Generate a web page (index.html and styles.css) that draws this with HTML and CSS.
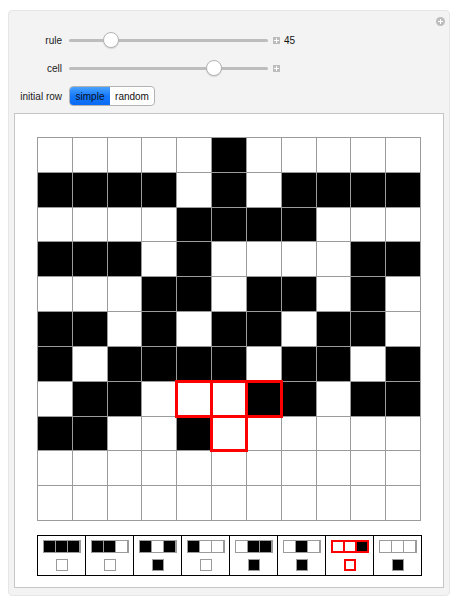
FILE: index.html
```html
<!DOCTYPE html>
<html>
<head>
<meta charset="utf-8">
<link rel="stylesheet" href="styles.css">
</head>
<body>
<div class="panel">
  <span class="corner-plus"></span>
  <div class="controls">
    <div class="row">
      <span class="label">rule</span>
      <div class="slider"><div class="track"></div><span class="thumb" style="left:34px"></span></div>
      <span class="plus"></span>
      <span class="value">45</span>
    </div>
    <div class="row">
      <span class="label">cell</span>
      <div class="slider"><div class="track"></div><span class="thumb" style="left:137px"></span></div>
      <span class="plus"></span>
    </div>
    <div class="row">
      <span class="label">initial row</span>
      <div class="seg">
        <span class="btn on">simple</span>
        <span class="btn">random</span>
      </div>
    </div>
  </div>
  <div class="output">
    <div class="grid">
      <i></i><i></i><i></i><i></i><i></i><i class="k"></i><i></i><i></i><i></i><i></i><i></i>
      <i class="k"></i><i class="k"></i><i class="k"></i><i class="k"></i><i></i><i class="k"></i><i></i><i class="k"></i><i class="k"></i><i class="k"></i><i class="k"></i>
      <i></i><i></i><i></i><i></i><i class="k"></i><i class="k"></i><i class="k"></i><i class="k"></i><i></i><i></i><i></i>
      <i class="k"></i><i class="k"></i><i class="k"></i><i></i><i class="k"></i><i></i><i></i><i></i><i></i><i class="k"></i><i class="k"></i>
      <i></i><i></i><i></i><i class="k"></i><i class="k"></i><i></i><i class="k"></i><i class="k"></i><i></i><i class="k"></i><i></i>
      <i class="k"></i><i class="k"></i><i></i><i class="k"></i><i></i><i class="k"></i><i class="k"></i><i></i><i class="k"></i><i class="k"></i><i></i>
      <i class="k"></i><i></i><i class="k"></i><i class="k"></i><i class="k"></i><i class="k"></i><i></i><i class="k"></i><i class="k"></i><i></i><i class="k"></i>
      <i></i><i class="k"></i><i class="k"></i><i></i><i class="hl"></i><i class="hl"></i><i class="k hl"></i><i class="k"></i><i></i><i class="k"></i><i class="k"></i>
      <i class="k"></i><i class="k"></i><i></i><i></i><i class="k"></i><i class="hl"></i><i></i><i></i><i></i><i></i><i></i>
      <i></i><i></i><i></i><i></i><i></i><i></i><i></i><i></i><i></i><i></i><i></i>
      <i></i><i></i><i></i><i></i><i></i><i></i><i></i><i></i><i></i><i></i><i></i>
    </div>
    <div class="rules">
      <div class="rule"><div class="tri"><b class="k"></b><b class="k"></b><b class="k"></b></div><b class="out"></b></div>
      <div class="rule"><div class="tri"><b class="k"></b><b class="k"></b><b></b></div><b class="out"></b></div>
      <div class="rule"><div class="tri"><b class="k"></b><b></b><b class="k"></b></div><b class="out k"></b></div>
      <div class="rule"><div class="tri"><b class="k"></b><b></b><b></b></div><b class="out"></b></div>
      <div class="rule"><div class="tri"><b></b><b class="k"></b><b class="k"></b></div><b class="out k"></b></div>
      <div class="rule"><div class="tri"><b></b><b class="k"></b><b></b></div><b class="out k"></b></div>
      <div class="rule active"><div class="tri"><b></b><b></b><b class="k"></b></div><b class="out"></b></div>
      <div class="rule"><div class="tri"><b></b><b></b><b></b></div><b class="out k"></b></div>
    </div>
  </div>
</div>
</body>
</html>
```
FILE: styles.css
```css
* { box-sizing: border-box; }
html, body { background: #ffffff; }
body {
  margin: 0;
  padding: 10px 8px 8px 8px;
  font-family: "Liberation Sans", Arial, sans-serif;
  font-size: 10px;
  color: #1a1a1a;
}
.panel {
  position: relative;
  width: 442px;
  background: #f3f3f3;
  border: 1px solid #e6e6e6;
  border-radius: 4px;
  padding: 19px 5px 7px 5px;
}
.corner-plus {
  position: absolute;
  top: 6px;
  right: 4px;
  width: 9px;
  height: 9px;
  border-radius: 50%;
  background: #bdbdbd;
}
.corner-plus::before, .corner-plus::after {
  content: "";
  position: absolute;
  background: #ffffff;
}
.corner-plus::before { left: 2px; top: 4px; width: 5px; height: 1px; }
.corner-plus::after { left: 4px; top: 2px; width: 1px; height: 5px; }

.controls {
  display: flex;
  flex-direction: column;
  gap: 8px;
}
.row {
  display: flex;
  align-items: center;
  height: 20px;
}
.label {
  width: 48px;
  text-align: right;
  margin-right: 7px;
  white-space: nowrap;
}
.slider {
  position: relative;
  width: 199px;
  height: 20px;
  display: flex;
  align-items: center;
}
.track {
  width: 100%;
  height: 3px;
  border-radius: 2px;
  background: #bdbdbd;
}
.thumb {
  position: absolute;
  top: 2px;
  width: 16px;
  height: 16px;
  border-radius: 50%;
  background: #ffffff;
  border: 1px solid #b4b4b4;
  box-shadow: 0 1px 1px rgba(0,0,0,0.12);
}
.plus {
  position: relative;
  width: 7px;
  height: 7px;
  margin-left: 5px;
  background: #bcbcbc;
}
.plus::before, .plus::after {
  content: "";
  position: absolute;
  background: #ffffff;
}
.plus::before { left: 1px; top: 3px; width: 5px; height: 1px; }
.plus::after { left: 3px; top: 1px; width: 1px; height: 5px; }
.value {
  margin-left: 4px;
  color: #111;
}
.seg {
  display: flex;
  height: 20px;
  border: 1px solid #b3b3b3;
  border-radius: 4px;
  overflow: hidden;
  background: #ffffff;
}
.btn {
  display: flex;
  align-items: center;
  justify-content: center;
  padding: 0 5px;
  color: #111;
}
.btn.on {
  width: 40px;
  background: linear-gradient(#4aa2ff, #1679fb 50%, #0a6bf3);
  color: #0a1020;
}
.btn:last-child { width: 44px; }

.output {
  margin-top: 7px;
  background: #ffffff;
  border: 1px solid #c6c6c6;
  padding: 23px 22px 11px 22px;
  display: flex;
  flex-direction: column;
  align-items: flex-start;
}
.grid {
  width: 384px;
  height: 384px;
  display: grid;
  grid-template-columns: repeat(11, 1fr);
  grid-template-rows: repeat(11, 1fr);
  gap: 1px;
  border: 1px solid #9b9b9b;
  background: #9b9b9b;
}
.grid i {
  display: block;
  background: #ffffff;
}
.grid i.k { background: #000000; }
.grid i.hl {
  z-index: 1;
  outline: 3px solid #ff0000;
  outline-offset: -1px;
}
.rules {
  margin-top: 14px;
  display: flex;
  border: 1px solid #000;
}
.rule {
  width: 47px;
  height: 39px;
  padding-top: 4px;
  display: flex;
  flex-direction: column;
  align-items: center;
  gap: 6px;
}
.rule + .rule { border-left: 1px solid #000; width: 48px; }
.tri {
  width: 38px;
  height: 13px;
  display: grid;
  grid-template-columns: repeat(3, 1fr);
  gap: 1px;
  border: 1px solid #9b9b9b;
  background: #9b9b9b;
}
.tri b, .out {
  display: block;
  background: #ffffff;
}
.tri b.k, .out.k { background: #000000; }
.out {
  width: 12px;
  height: 12px;
  border: 1px solid #9b9b9b;
}
.rule.active .tri {
  gap: 2px;
  border: 2px solid #ff0000;
  background: #ff0000;
}
.rule.active .out {
  border: 2px solid #ff0000;
}
```
